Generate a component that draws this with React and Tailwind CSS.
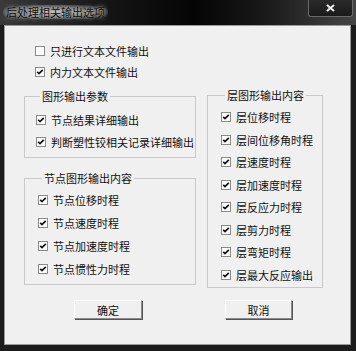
import React from 'react';

const font = { fontFamily: '"Noto Sans CJK SC", "Noto Sans", sans-serif' };

function CheckBox({ checked }) {
  return (
    <span className="flex h-[10px] w-[10px] shrink-0 items-center justify-center border border-[#8a8a8a] bg-white">
      {checked && (
        <svg width="8" height="8" viewBox="0 0 8 8">
          <path d="M1.2 3.8 L3 5.6 L6.8 1.8" stroke="#141414" strokeWidth="1.8" fill="none" />
        </svg>
      )}
    </span>
  );
}

function Row({ label, checked = true, h = 'h-[22px]' }) {
  return (
    <div className={`flex items-center gap-[5px] ${h}`}>
      <CheckBox checked={checked} />
      <span className="text-[11px] leading-[14px] text-[#111]">{label}</span>
    </div>
  );
}

function Group({ title, children, className }) {
  return (
    <fieldset className={`border border-[#c9c9c9] ${className}`}>
      <legend className="ml-[4px] px-[2px] text-[11px] leading-[14px] text-[#111]">{title}</legend>
      {children}
    </fieldset>
  );
}

export default function App() {
  const nodeRows = ['节点位移时程', '节点速度时程', '节点加速度时程', '节点惯性力时程'];
  const storyRows = ['层位移时程', '层间位移角时程', '层速度时程', '层加速度时程', '层反应力时程', '层剪力时程', '层弯矩时程', '层最大反应输出'];

  return (
    <div className="flex h-[351px] w-[356px] flex-col bg-[#1c1c1c] select-none" style={font}>
      {/* 标题栏 */}
      <div className="flex h-[25px] items-start bg-[linear-gradient(90deg,#3a3a3a_0%,#151515_30%,#050505_55%,#1a1a1a_75%,#454545_100%)]">
        <span className="ml-[3px] mt-[5px] rounded-full bg-[radial-gradient(ellipse_at_center,rgba(215,215,215,0.8)_0%,rgba(160,160,160,0.45)_60%,transparent_85%)] px-[3px] text-[11px] leading-[14px] text-[#101010] [text-shadow:0_0_4px_#ddd]">
          后处理相关输出选项
        </span>
        <div className="ml-auto mr-[3px] flex h-[17px] w-[45px] items-center justify-center rounded-b-[3px] border border-t-0 border-[#6a6a6a] bg-[linear-gradient(180deg,#2a2a2a,#1a1a1a)]">
          <svg width="9" height="8" viewBox="0 0 9 8">
            <path d="M1 1 L8 7 M8 1 L1 7" stroke="#f2f2f2" strokeWidth="2" />
          </svg>
        </div>
      </div>

      {/* 客户区 */}
      <div className="ml-[4px] h-[320px] w-[347px] border border-[#9a9a9a] bg-[#f0f0f0]">
        <div className="flex pl-[19px]">
          {/* 左列 */}
          <div className="flex w-[172px] flex-col">
            <div className="mt-[14px] flex flex-col pl-[11px]">
              <Row label="只进行文本文件输出" checked={false} h="h-[21px]" />
              <Row label="内力文本文件输出" h="h-[21px]" />
            </div>
            <Group title="图形输出参数" className="mt-[7px] pb-[4px] pl-[11px] pt-[6px]">
              <Row label="节点结果详细输出" />
              <Row label="判断塑性铰相关记录详细输出" />
            </Group>
            <Group title="节点图形输出内容" className="mt-[13px] pb-[4px] pl-[13px] pt-[3px]">
              {nodeRows.map((r) => (
                <Row key={r} label={r} h="h-[23px]" />
              ))}
            </Group>
          </div>

          {/* 右列 */}
          <Group title="层图形输出内容" className="ml-[11px] mt-[62px] w-[116px] pb-[1px] pl-[13px] pt-[4px]">
            {storyRows.map((r) => (
              <Row key={r} label={r} h="h-[22.5px]" />
            ))}
          </Group>
        </div>

        {/* 按钮 */}
        <div className="mt-[12px] flex pl-[69px]">
          <button className="h-[19px] w-[68px] border border-[#fff] border-b-[#8a8a8a] border-r-[#8a8a8a] bg-[#f0f0f0] text-[11px] leading-[14px] text-[#111] shadow-[1px_1px_0_#555]">
            确定
          </button>
          <button className="ml-[83px] h-[19px] w-[67px] border border-[#fff] border-b-[#8a8a8a] border-r-[#8a8a8a] bg-[#f0f0f0] text-[11px] leading-[14px] text-[#111] shadow-[1px_1px_0_#555]">
            取消
          </button>
        </div>
      </div>
    </div>
  );
}
